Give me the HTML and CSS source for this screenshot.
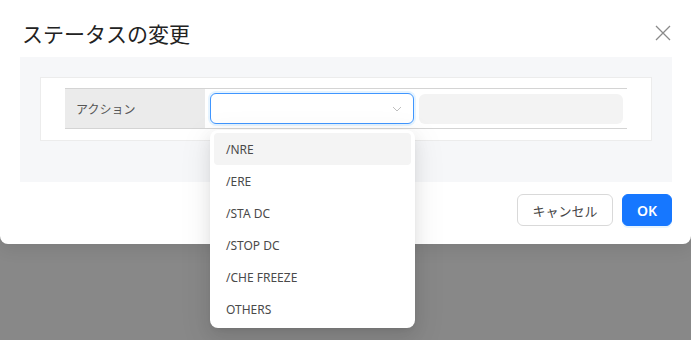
FILE: index.html
```html
<!DOCTYPE html>
<html lang="ja">
<head>
    <meta charset="UTF-8">
    <meta name="viewport" content="width=device-width, initial-scale=1.0">
    <title>ステータスの変更</title>
    <link rel="stylesheet" href="styles.css">
</head>
<body>
    <div class="modal">
        <div class="modal-header">
            <h2 class="modal-title">ステータスの変更</h2>
            <button class="close-button" aria-label="close">
                <svg width="16" height="16" viewBox="0 0 16 16">
                    <path d="M1 1 L15 15 M15 1 L1 15" stroke="#8a8a8a" stroke-width="1.3" fill="none"/>
                </svg>
            </button>
        </div>

        <div class="modal-body">
            <div class="form-box">
                <div class="form-row">
                    <div class="row-label">アクション</div>
                    <div class="row-field">
                        <div class="select is-open">
                            <svg class="select-arrow" width="10" height="6" viewBox="0 0 10 6">
                                <path d="M1 1 L5 5 L9 1" stroke="#bfbfbf" stroke-width="1" fill="none"/>
                            </svg>
                        </div>
                        <div class="input-disabled"></div>
                    </div>
                </div>
            </div>
        </div>

        <div class="modal-footer">
            <button class="btn btn-default">キャンセル</button>
            <button class="btn btn-primary">OK</button>
        </div>
    </div>

    <!-- ドロップダウン (セレクトの下に重ねる) -->
    <ul class="dropdown">
        <li class="dropdown-item is-active">/NRE</li>
        <li class="dropdown-item">/ERE</li>
        <li class="dropdown-item">/STA DC</li>
        <li class="dropdown-item">/STOP DC</li>
        <li class="dropdown-item">/CHE FREEZE</li>
        <li class="dropdown-item">OTHERS</li>
    </ul>
</body>
</html>
```

FILE: styles.css
```css
body {
    font-family: "Noto Sans", "Noto Sans CJK JP", sans-serif;
    margin: 0;
    height: 340px;
    overflow: hidden;
    background-color: #888; /* オーバーレイ */
    color: #333;
}

.modal {
    background-color: #fff;
    border-radius: 0 0 8px 8px;
    box-shadow: 0 6px 16px rgba(0, 0, 0, 0.08);
    padding: 19px 19px 19px 20px;
    height: 244px;
    box-sizing: border-box;
}

.modal-header {
    display: flex;
    justify-content: space-between;
    align-items: center;
    height: 28px;
    margin-bottom: 10px;
}

.modal-title {
    margin: 0 0 0 2px;
    font-family: "Noto Sans CJK JP", sans-serif;
    font-size: 21px;
    font-weight: 400;
    color: #222;
    line-height: 28px;
}

.close-button {
    border: none;
    background: none;
    padding: 0;
    margin-right: 1px;
    width: 16px;
    height: 16px;
    display: flex;
    cursor: pointer;
}

.modal-body {
    background-color: #f6f7f9;
    padding: 20px 20px 41px;
}

.form-box {
    background-color: #fff;
    border: 1px solid #ececec;
    padding: 10px 24px 11px;
}

.form-row {
    display: flex;
    border-top: 1px solid #d4d4d4;
    border-bottom: 1px solid #d4d4d4;
    height: 39px;
}

.row-label {
    width: 140px;
    background-color: #ebebeb;
    font-family: "Noto Sans CJK JP", sans-serif;
    font-size: 12px;
    color: #555;
    padding-left: 11px;
    display: flex;
    align-items: center;
    box-sizing: border-box;
}

.row-field {
    flex: 1;
    display: flex;
    align-items: center;
    padding: 0 4px 0 5px;
    gap: 5px;
}

.select {
    width: 204px;
    height: 31px;
    box-sizing: border-box;
    border: 1px solid #4096ff;
    border-radius: 6px;
    background-color: #fff;
    display: flex;
    justify-content: flex-end;
    align-items: center;
    padding-right: 11px;
}

.select.is-open {
    box-shadow: 0 0 0 2px rgba(5, 145, 255, 0.1);
}

.input-disabled {
    flex: 1;
    height: 30px;
    background-color: #f3f3f3;
    border-radius: 6px;
}

.modal-footer {
    display: flex;
    justify-content: flex-end;
    gap: 9px;
    margin-top: 12px;
}

.btn {
    height: 32px;
    border-radius: 6px;
    font-family: "Noto Sans CJK JP", sans-serif;
    font-size: 13px;
    padding: 0;
    white-space: nowrap;
    cursor: pointer;
}

.btn-default {
    width: 96px;
    background-color: #fff;
    border: 1px solid #d9d9d9;
    color: #444;
}

.btn-primary {
    width: 50px;
    background-color: #1677ff;
    border: 1px solid #1677ff;
    color: #fff;
    font-family: "Noto Sans", sans-serif;
    font-weight: 600;
    font-size: 14px;
    box-shadow: 0 2px 0 rgba(5, 145, 255, 0.1);
}

.dropdown {
    position: absolute;
    left: 210px;
    top: 130px;
    width: 205px;
    margin: 0;
    padding: 3px 4px;
    box-sizing: border-box;
    list-style: none;
    background-color: #fff;
    border-radius: 8px;
    box-shadow: 0 6px 16px rgba(0, 0, 0, 0.08), 0 3px 6px -4px rgba(0, 0, 0, 0.12), 0 9px 28px 8px rgba(0, 0, 0, 0.05);
}

.dropdown-item {
    height: 32px;
    line-height: 33px;
    padding-left: 12px;
    font-size: 12px;
    color: #4a4a4a;
    border-radius: 4px;
}

.dropdown-item.is-active {
    background-color: #f4f4f4;
}
```
